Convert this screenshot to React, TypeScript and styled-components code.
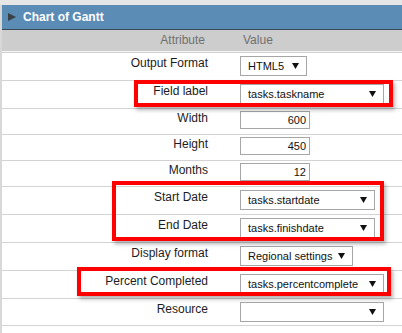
import styled, {createGlobalStyle} from "styled-components";

const GlobalStyle = createGlobalStyle`
  html, body {
    margin: 0;
    padding: 0;
    background: #ffffff;
  }
  body {
    font-family: "Liberation Sans", Arial, sans-serif;
  }
`

type Field = {
  label: string
  kind: 'select' | 'input'
  value: string
  width: number
  height: number
}

const fields: Field[] = [
  {label: 'Output Format', kind: 'select', value: 'HTML5', width: 67, height: 27},
  {label: 'Field label', kind: 'select', value: 'tasks.taskname', width: 144, height: 27},
  {label: 'Width', kind: 'input', value: '600', width: 70, height: 25},
  {label: 'Height', kind: 'input', value: '450', width: 70, height: 25},
  {label: 'Months', kind: 'input', value: '12', width: 70, height: 25},
  {label: 'Start Date', kind: 'select', value: 'tasks.startdate', width: 135, height: 27},
  {label: 'End Date', kind: 'select', value: 'tasks.finishdate', width: 135, height: 27},
  {label: 'Display format', kind: 'select', value: 'Regional settings', width: 113, height: 27},
  {label: 'Percent Completed', kind: 'select', value: 'tasks.percentcomplete', width: 144, height: 27},
  {label: 'Resource', kind: 'select', value: '', width: 144, height: 26},
]

// red marks drawn over the grid (page coords, minus the 5px top strip)
const marks = [
  {x: 134, y: 75, w: 259, h: 27},
  {x: 112, y: 176, w: 272, h: 60},
  {x: 77, y: 262, w: 314, h: 29},
]

const Arrow = () => (
  <svg width="7" height="6" viewBox="0 0 7 6">
    <polygon points="0,0 7,0 3.5,6" fill="#111"/>
  </svg>
)

const App = () => {
  return (
    <Screen>
      <GlobalStyle/>
      <Panel>
        <TitleBar>
          <svg width="8" height="8" viewBox="0 0 8 8">
            <polygon points="0,0 8,4 0,8" fill="#3a3f44"/>
          </svg>
          <span>Chart of Gantt</span>
        </TitleBar>

        <HeadRow>
          <HeadLabel>Attribute</HeadLabel>
          <HeadValue>Value</HeadValue>
        </HeadRow>

        <Body>
          {fields.map((f) => (
            <Row key={f.label} $h={f.height}>
              <Label $pad={f.kind === 'input' ? 2 : 3}>{f.label}</Label>
              <ValueCell $pad={f.kind === 'input' ? 2 : 3}>
                {f.kind === 'select' ? (
                  <SelectBox $w={f.width}>
                    <span>{f.value}</span>
                    <Arrow/>
                  </SelectBox>
                ) : (
                  <NumberBox $w={f.width}>{f.value}</NumberBox>
                )}
              </ValueCell>
            </Row>
          ))}
        </Body>
      </Panel>

      {marks.map((m, i) => (
        <Mark key={i} $x={m.x} $y={m.y} $w={m.w} $h={m.h}/>
      ))}
    </Screen>
  );
};

const Screen = styled.div`
  position: relative;
  width: 402px;
  min-height: 333px;
  box-sizing: border-box;
  border-top: 5px solid #e6e6e6;
  display: flex;
  flex-direction: column;
`

const Panel = styled.div`
  flex: 1;
  border-left: 2px solid #d8d8d8;
  display: flex;
  flex-direction: column;
`

const TitleBar = styled.div`
  height: 24px;
  background: #5a8cb6;
  border-bottom: 1px solid #3b4956;
  display: flex;
  align-items: center;
  gap: 7px;
  padding-left: 6px;
  color: #ffffff;
  font-size: 12px;
  font-weight: bold;
`

const HeadRow = styled.div`
  display: grid;
  grid-template-columns: 222px 1fr;
  height: 21px;
  line-height: 21px;
  background: #cdcdcd;
  border-bottom: 1px solid #f4f4f4;
  color: #707070;
  font-size: 12px;
`

const HeadLabel = styled.div`
  text-align: right;
  padding-right: 19px;
`

const HeadValue = styled.div`
  padding-left: 19px;
`

const Body = styled.div`
  border-top: 1px solid #d3d3d3;
`

const Row = styled.div<{ $h: number }>`
  display: grid;
  grid-template-columns: 222px 1fr;
  height: ${p => p.$h}px;
  border-bottom: 1px solid #d3d3d3;
`

const Label = styled.div<{ $pad: number }>`
  text-align: right;
  padding: ${p => p.$pad}px 16px 0 0;
  font-size: 12px;
  line-height: 14px;
  color: #1c1c24;
`

const ValueCell = styled.div<{ $pad: number }>`
  padding: ${p => p.$pad}px 0 0 16px;
`

const SelectBox = styled.div<{ $w: number }>`
  width: ${p => p.$w}px;
  height: 20px;
  box-sizing: border-box;
  border: 1px solid #a6a6a6;
  background: #ffffff;
  display: flex;
  align-items: center;
  justify-content: space-between;
  padding: 0 7px 0 7px;
  font-size: 11px;
  color: #111;
`

const NumberBox = styled.div<{ $w: number }>`
  width: ${p => p.$w}px;
  height: 18px;
  box-sizing: border-box;
  border: 1px solid #a6a6a6;
  background: #ffffff;
  text-align: right;
  padding-right: 3px;
  font-size: 11px;
  line-height: 16px;
  color: #111;
`

const Mark = styled.div<{ $x: number, $y: number, $w: number, $h: number }>`
  position: absolute;
  left: ${p => p.$x}px;
  top: ${p => p.$y}px;
  width: ${p => p.$w}px;
  height: ${p => p.$h}px;
  box-sizing: border-box;
  border: 4px solid #ff0000;
  box-shadow: 2px 3px 4px rgba(0, 0, 0, 0.3);
  pointer-events: none;
`

export default App;
